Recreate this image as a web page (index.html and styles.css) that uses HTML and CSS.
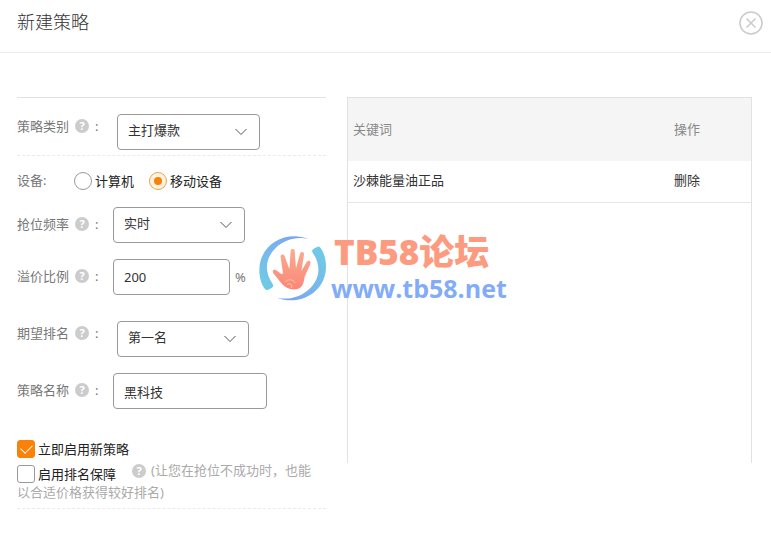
FILE: index.html
```html
<!DOCTYPE html>
<html lang="zh-CN">
<head>
    <meta charset="UTF-8">
    <meta name="viewport" content="width=device-width, initial-scale=1.0">
    <title>新建策略</title>
    <link rel="stylesheet" href="styles.css">
</head>
<body>
    <header class="header">
        <h1>新建策略</h1>
        <button type="button" class="close" aria-label="关闭">
            <svg width="24" height="24" viewBox="0 0 24 24" fill="none" stroke="#ccc">
                <circle cx="12" cy="12" r="11" stroke-width="1.6"/>
                <path d="M7.500 7.500l9 9M16.500 7.500l-9 9" stroke-width="1.600"/>
            </svg>
        </button>
    </header>

    <main class="content">
        <form class="form">
            <div class="row row-top row-first">
                <label class="name" for="category">策略类别<span class="help">?</span>:</label>
                <div class="select select-lg">
                    <select id="category"><option>主打爆款</option></select>
                    <svg width="14" height="8" viewBox="0 0 14 8"><path d="M1.500 1l5.500 5.500L12.500 1"/></svg>
                </div>
            </div>

            <div class="row row-device">
                <span class="name name-short">设备:</span>
                <label class="choice"><input type="radio" name="device">计算机</label>
                <label class="choice"><input type="radio" name="device" checked>移动设备</label>
            </div>

            <div class="row">
                <label class="name" for="rate">抢位频率<span class="help">?</span>:</label>
                <div class="select">
                    <select id="rate"><option>实时</option></select>
                    <svg width="14" height="8" viewBox="0 0 14 8"><path d="M1.500 1l5.500 5.500L12.500 1"/></svg>
                </div>
            </div>

            <div class="row row-gap">
                <label class="name" for="premium">溢价比例<span class="help">?</span>:</label>
                <input type="text" class="text text-sm" id="premium" value="200">
                <span class="unit">%</span>
            </div>

            <div class="row row-top">
                <label class="name" for="rank">期望排名<span class="help">?</span>:</label>
                <div class="select">
                    <select id="rank"><option>第一名</option></select>
                    <svg width="14" height="8" viewBox="0 0 14 8"><path d="M1.500 1l5.500 5.500L12.500 1"/></svg>
                </div>
            </div>

            <div class="row">
                <label class="name" for="title">策略名称<span class="help">?</span>:</label>
                <input type="text" class="text" id="title" value="黑科技">
            </div>

            <div class="checks">
                <label class="check"><input type="checkbox" checked>立即启用新策略</label>
                <div class="protect">
                    <label class="check"><input type="checkbox">启用排名保障</label>
                    <span class="help">?</span>(让您在抢位不成功时，也能以合适价格获得较好排名)
                </div>
            </div>
        </form>

        <section class="keywords">
            <table>
                <thead>
                    <tr><th>关键词</th><th class="action">操作</th></tr>
                </thead>
                <tbody>
                    <tr><td>沙棘能量油正品</td><td class="action"><a href="#">删除</a></td></tr>
                </tbody>
            </table>
        </section>

        <div class="watermark">
            <svg width="76" height="76" viewBox="0 0 228 228">
                <defs>
                    <linearGradient id="ring" x1="0" y1="1" x2="1" y2="0">
                        <stop offset="0" stop-color="#6ccfe2"/>
                        <stop offset="0.450" stop-color="#78b8ee"/>
                        <stop offset="1" stop-color="#7c9ff2"/>
                    </linearGradient>
                    <linearGradient id="palm" x1="0" y1="0" x2="0" y2="1">
                        <stop offset="0" stop-color="#fbac90"/>
                        <stop offset="1" stop-color="#fa8778"/>
                    </linearGradient>
                </defs>
                <path id="arc" fill="url(#ring)" d="M160 27C90 0 13 45 13 120c0 23 6 43 17 57q4 5 10 2l11-6q6-4 2-11C28 127 30 86 60 56 86 29 125 19 160 27z"/>
                <use href="#arc" transform="rotate(180 113 115)"/>
                <path fill="url(#palm)" d="M84 130L77 82c-2-9 9-12 12-3l14 38 4-55c1-7 12-7 12 0l4 53 12-44c3-8 14-6 12 4l-8 48 16-27c6-8 14-3 11 6l-17 38c-3 20-7 35-26 38-18 2-30-4-42-16L55 130c-5-9 2-13 9-9l16 12z"/>
                <path fill="none" stroke="#ffc6a3" stroke-width="3" d="M91 156c8-11 25-8 29 3M96 164c9-7 18 2 12 10"/>
            </svg>
            <div class="brand">
                <strong>TB58论坛</strong>
                <span>www.tb58.net</span>
            </div>
        </div>
    </main>
</body>
</html>
```
FILE: styles.css
```css
* {
    box-sizing: border-box;
}
body {
    margin: 0;
    background: #fff;
    color: #333;
    font-family: "Noto Sans", "Noto Sans CJK SC", sans-serif;
    font-size: 13px;
    line-height: 22px;
}
input, select, button {
    font: inherit;
    color: inherit;
}
.header {
    display: flex;
    justify-content: space-between;
    align-items: center;
    height: 53px;
    padding: 0 8px 8px 17px;
    border-bottom: 1px solid #ebebeb;
}
h1 {
    margin: 0;
    font-size: 18px;
    font-weight: 300;
}
.close {
    width: 24px;
    height: 24px;
    margin-top: 2px;
    padding: 0;
    border: none;
    background: none;
    cursor: pointer;
}
.close svg {
    display: block;
}
.content {
    position: relative;
    display: grid;
    grid-template-columns: 309fr 405fr;
    gap: 21px;
    align-items: start;
    padding: 44px 19px 29px 17px;
}

/* form */
.form {
    border-top: 1px solid #e2e2e2;
    border-bottom: 1px dashed #ebebeb;
}
.row {
    display: flex;
    align-items: center;
    margin-bottom: 16px;
}
.row-top {
    align-items: flex-start;
}
.row-first {
    margin: 0;
    padding: 16px 0 5px;
    border-bottom: 1px dashed #ebebeb;
}
.row-device {
    height: 51px;
    margin: 0;
    padding-bottom: 2px;
}
.row-gap {
    margin-bottom: 26px;
}
.name {
    display: flex;
    align-items: center;
    width: 96px;
    padding-bottom: 2px;
    color: #777;
}
.row-top .name {
    width: 100px;
    height: 26px;
}
.name-short {
    width: 57px;
}
.help {
    display: inline-block;
    width: 14px;
    height: 14px;
    margin: 0 6px;
    border-radius: 50%;
    background: #ccc;
    color: #fff;
    font-size: 11px;
    font-weight: 700;
    line-height: 14px;
    text-align: center;
}
.select {
    position: relative;
    width: 132px;
}
.select-lg {
    width: 143px;
}
.select select, .text {
    display: block;
    width: 100%;
    height: 36px;
    padding: 0 10px;
    border: 1px solid #999;
    border-radius: 4px;
    background: #fff;
    appearance: none;
}
.select select {
    padding-bottom: 4px;
}
.select svg {
    position: absolute;
    top: 14px;
    right: 12px;
    fill: none;
    stroke: #555;
    pointer-events: none;
}
.text {
    width: 154px;
}
.text-sm {
    width: 117px;
}
.unit {
    margin-left: 5px;
    color: #777;
}
.choice, .check {
    display: flex;
    align-items: center;
    color: #222;
}
.choice {
    margin-right: 15px;
}
.choice input, .check input {
    display: grid;
    place-content: center;
    width: 18px;
    height: 18px;
    margin: 0 3px 0 0;
    border: 1px solid #999;
    border-radius: 3px;
    background: #fff;
    appearance: none;
}
.choice input {
    border-radius: 50%;
}
.choice input:checked {
    border-color: #e9a34f;
    background: #fff3e0;
}
.choice input:checked::before {
    content: "";
    width: 8px;
    height: 8px;
    border-radius: 50%;
    background: #f5820b;
}
.check input:checked {
    border-color: #fa8208;
    background: #fa8208;
}
.check input:checked::before {
    content: "";
    width: 10px;
    height: 6px;
    margin-bottom: 3px;
    border: solid #fff;
    border-width: 0 0 1px 1px;
    transform: rotate(-45deg);
}
.checks {
    padding: 15px 0 5px;
}
.check {
    height: 18px;
}
.protect {
    margin-top: 1px;
    padding-right: 8px;
    color: #aaa;
}
.protect .check {
    float: left;
    height: 22px;
    margin-right: 10px;
    padding-top: 8px;
}
.protect .help {
    margin-right: 5px;
}

/* keyword table */
.keywords {
    min-height: 366px;
    border: solid #e2e2e2;
    border-width: 1px 1px 0;
}
table {
    width: 100%;
    border-collapse: collapse;
}
th, td {
    padding: 0 5px 2px;
    font-weight: 400;
    text-align: left;
}
th {
    height: 63px;
    background: #f5f5f5;
    color: #888;
}
td {
    height: 41px;
    border-bottom: 1px solid #e6e6e6;
}
.action {
    width: 82px;
}
td a {
    color: #333;
    text-decoration: none;
}

/* floating logo over the dialog */
.watermark {
    position: absolute;
    top: 177px;
    left: 255px;
    display: flex;
    align-items: center;
    pointer-events: none;
}
.brand {
    font-family: "Open Sans", "Noto Sans CJK SC", sans-serif;
    font-weight: 700;
}
.brand strong, .brand span {
    display: block;
}
.brand strong {
    padding-left: 3px;
    color: #fd9b80;
    font-size: 35px;
    line-height: 40px;
}
.brand span {
    color: #83acf8;
    font-size: 25px;
    line-height: 32px;
}
```
